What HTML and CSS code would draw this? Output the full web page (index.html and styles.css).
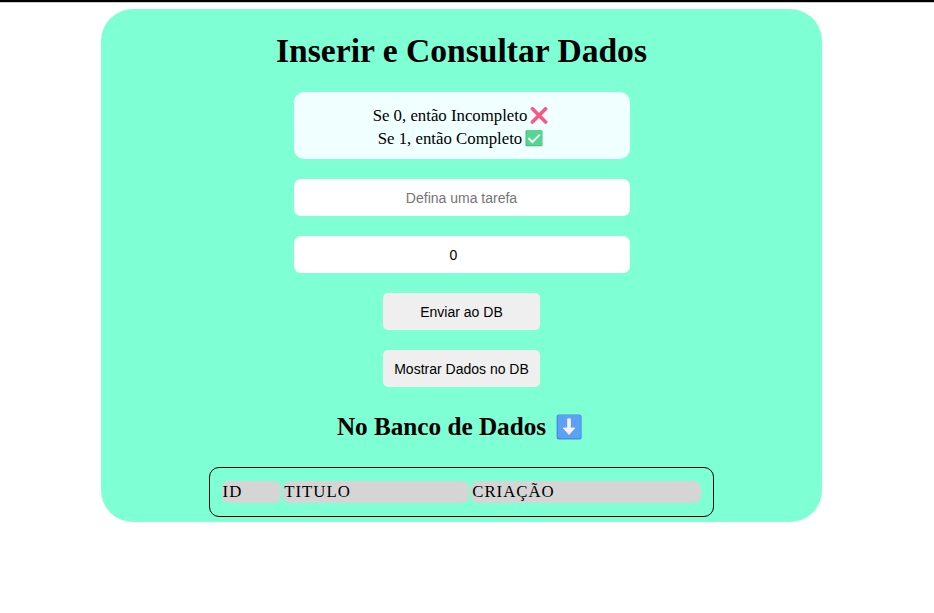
FILE: index.html
```html
<!DOCTYPE html>
<html lang="pt-BR">
<head>
<meta charset="utf-8">
<title>Inserir e Consultar Dados</title>
<link rel="stylesheet" href="styles.css">
</head>
<body>
<main class="card">
  <h1 class="title"><span>Inserir e Consultar Dados</span></h1>
  <div class="legend">
    <p class="legend-row"><span>Se 0, então Incompleto</span><svg class="mark" viewBox="0 0 18 18"><path d="M2.4 1.8 15.6 15M15.6 1.8 2.4 15" stroke="#fb5685" stroke-width="3.6" stroke-linecap="round"/></svg></p>
    <p class="legend-row"><span>Se 1, então Completo</span><svg class="mark" viewBox="0 0 18 18"><rect x=".5" y=".3" width="17" height="16" rx="1.2" fill="#47bd7c"/><rect x="1.5" y=".8" width="15.5" height="14.5" rx="1" fill="#55d58d"/><path d="m3.4 8 4 4 7.4-7.4" fill="none" stroke="#f2fff8" stroke-width="2"/></svg></p>
  </div>
  <input class="field" type="text" placeholder="Defina uma tarefa">
  <input class="field field-number" type="text" value="0">
  <button class="button" type="button">Enviar ao DB</button>
  <button class="button" type="button">Mostrar Dados no DB</button>
  <h2 class="subtitle"><span>No Banco de Dados</span><svg class="arrow" viewBox="0 0 26 26"><rect x=".6" y=".6" width="25" height="25" rx="2.5" fill="#4c84e0"/><rect x="1.8" y="1" width="23" height="23.2" rx="2" fill="#5ba2f5"/><path d="M11.6 4.8h2.8v9.2h4.4L13 20.6 7.2 14h4.4z" fill="#faf0ff" stroke="#faf0ff" stroke-width=".8" stroke-linejoin="round"/></svg></h2>
  <div class="table">
    <div class="cell">ID</div>
    <div class="cell">TITULO</div>
    <div class="cell">CRIAÇÃO</div>
  </div>
</main>
</body>
</html>
```
FILE: styles.css
```css
* { box-sizing: border-box; }
body {
  margin: 0;
  border-top: 2px solid #000;
  box-shadow: inset 0 1px #ccc;
  background: #fff;
  color: #000;
  font-family: "Liberation Serif", serif;
}
.card {
  display: flex;
  flex-direction: column;
  align-items: center;
  width: 721px;
  height: 513px;
  margin: 7px 0 0 101px;
  border-radius: 32px;
  background: #7fffd4;
}
.title {
  margin: 22px 0 21px;
  font-size: 33.6px;
  line-height: 40px;
  white-space: nowrap;
}
.legend {
  width: 336px;
  height: 67px;
  padding-top: 12px;
  border-radius: 10px;
  background: #f0ffff;
  font-size: 16.8px;
}
.legend-row {
  display: flex;
  justify-content: center;
  align-items: center;
  gap: 3px;
  height: 23px;
  margin: 0;
  padding-right: 2px;
}
.mark { width: 18px; height: 18px; }
.field {
  width: 336px;
  height: 37px;
  margin: 20px 0 0;
  padding: 0 10px;
  border: 0;
  border-radius: 7px;
  background: #fff;
  color: #000;
  font: 14px "Liberation Sans", sans-serif;
  text-align: center;
}
.field::placeholder { color: #757575; }
.field-number { padding-right: 26px; }
.button {
  width: 157px;
  height: 37px;
  margin: 20px 0 0;
  padding: 0;
  border: 0;
  border-radius: 5px;
  background: #efefef;
  color: #000;
  font: 14px "Liberation Sans", sans-serif;
}
.subtitle {
  display: flex;
  align-items: center;
  gap: 10px;
  height: 32px;
  margin: 23px 4px 25px 0;
  font-size: 25.2px;
  white-space: nowrap;
}
.subtitle span { padding-top: 2px; }
.arrow { width: 26px; height: 26px; margin-top: 1px; }
.table {
  display: grid;
  grid-template-columns: 59.6px 186px 230px;
  gap: 2px;
  width: 505px;
  height: 50px;
  padding: 13px 11.6px;
  border: 1px solid #000;
  border-radius: 10px;
}
.cell {
  height: 22px;
  padding-left: 1px;
  border-radius: 7px;
  background: #d5d5d5;
  font-size: 16.8px;
  line-height: 22px;
  letter-spacing: 1px;
}
```
